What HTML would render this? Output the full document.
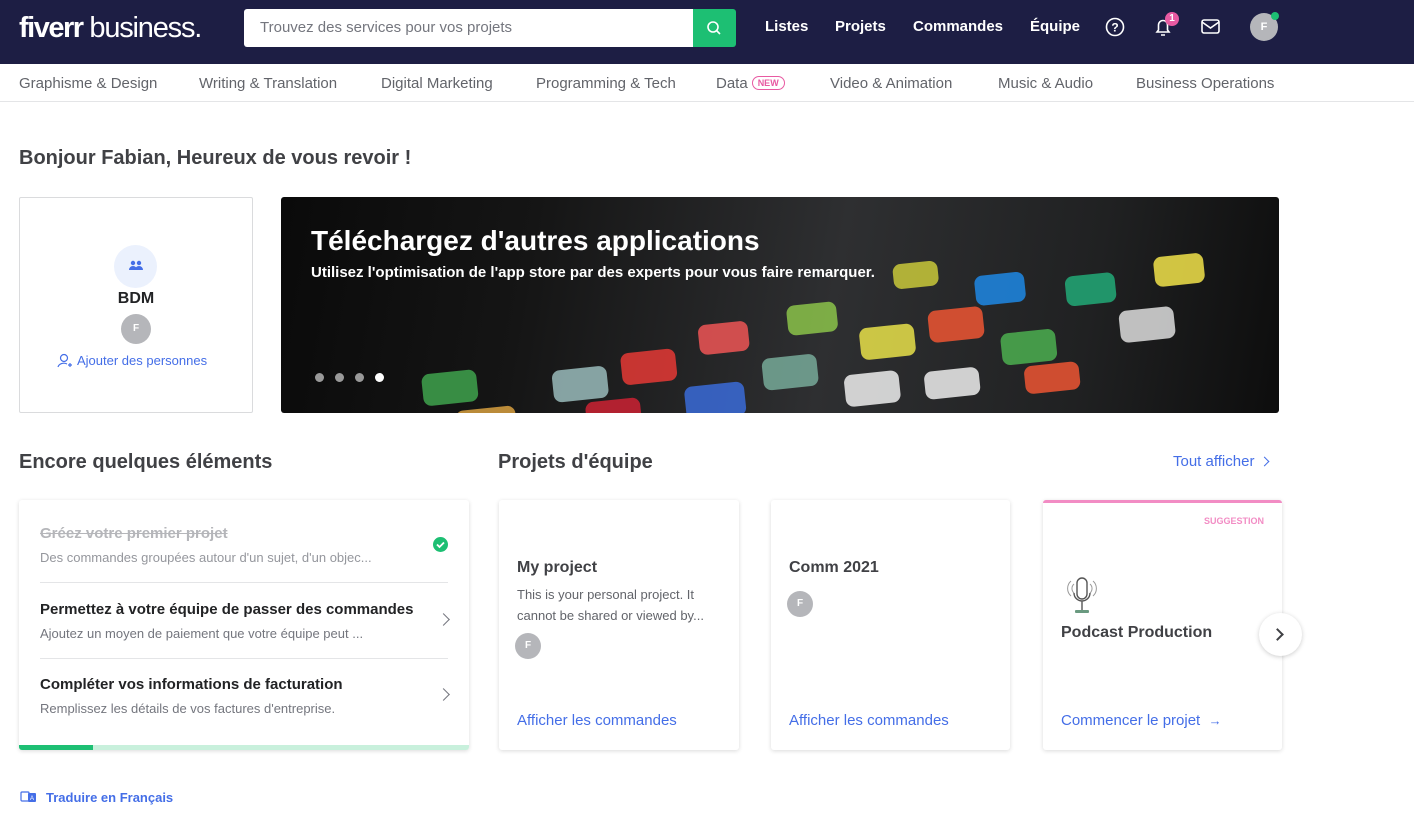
<!DOCTYPE html>
<html><head><meta charset="utf-8"><style>
*{box-sizing:border-box;margin:0;padding:0}
body{width:1414px;height:827px;overflow:hidden;background:#fff;font-family:"Liberation Sans",sans-serif;color:#404145;position:relative}
.top{position:absolute;left:0;top:0;width:1414px;height:64px;background:#1d1e44}
.logo{position:absolute;left:19px;top:12px;color:#fff;font-size:29px;letter-spacing:-1.2px}
.logo b{font-weight:700;letter-spacing:-1.5px}
.search{position:absolute;left:244px;top:9px;width:450px;height:38px;background:#fff;border-radius:3px 0 0 3px;font-size:15px;color:#74767e;padding:10px 16px}
.sbtn{position:absolute;left:693px;top:9px;width:43px;height:38px;background:#1dbf73;border-radius:0 3px 3px 0}
.nav{position:absolute;top:18px;color:#fff;font-weight:700;font-size:15px}
.cats{position:absolute;top:64px;left:0;width:1414px;height:38px;border-bottom:1px solid #e4e5e7}
.cat{position:absolute;top:11px;font-size:15px;color:#62646a}
.new{display:inline-block;border:1px solid #e85aa2;color:#e85aa2;font-size:9px;font-weight:700;border-radius:9px;padding:1px 5px;vertical-align:2px;margin-left:4px}
h1{position:absolute;left:19px;top:147px;font-size:20px;font-weight:700;color:#404145}
h2{position:absolute;font-size:20px;font-weight:700;color:#404145}
.card{position:absolute;background:#fff;border-radius:3px;box-shadow:0 1px 4px rgba(0,0,0,.15)}
.blue{color:#446ee7}
.av{position:absolute;width:26px;height:26px;border-radius:50%;background:#b5b6ba;color:#fff;font-size:10px;font-weight:700;text-align:center;line-height:26px}
.item{position:absolute;left:21px;width:408px}
.item .t{font-size:15px;font-weight:700;color:#222325}
.item .d{font-size:13px;color:#74767e;margin-top:8px}
.chev{position:absolute;right:0;top:14px;width:9px;height:9px;border-right:1.5px solid #74767e;border-top:1.5px solid #74767e;transform:rotate(45deg)}
.pt{position:absolute;left:18px;font-size:16px;font-weight:700;color:#404145}
.pl{position:absolute;left:18px;top:212px;font-size:15px;color:#446ee7}
</style></head><body>
<div class="top">
 <div class="logo"><b>fiverr</b> business.</div>
 <div class="search">Trouvez des services pour vos projets</div>
 <div class="sbtn"><svg width="43" height="38"><circle cx="20" cy="18" r="5" fill="none" stroke="#fff" stroke-width="1.6"/><line x1="24" y1="22" x2="27" y2="25" stroke="#fff" stroke-width="1.6"/></svg></div>
 <div class="nav" style="left:765px">Listes</div>
 <div class="nav" style="left:835px">Projets</div>
 <div class="nav" style="left:913px">Commandes</div>
 <div class="nav" style="left:1030px">Équipe</div>
 <svg style="position:absolute;left:1104px;top:16px" width="22" height="22"><circle cx="11" cy="11" r="8.5" fill="none" stroke="#fff" stroke-width="1.6"/><text x="11" y="15.5" fill="#fff" font-size="12" font-weight="700" text-anchor="middle" font-family="Liberation Sans">?</text></svg>
 <svg style="position:absolute;left:1152px;top:16px" width="22" height="22"><path d="M5 16h12l-1.5-2V9a4.5 4.5 0 0 0-9 0v5z M9 19h4" fill="none" stroke="#fff" stroke-width="1.6"/></svg>
 <div style="position:absolute;left:1165px;top:12px;width:14px;height:14px;border-radius:50%;background:#e85aa2;color:#fff;font-size:10px;font-weight:700;text-align:center;line-height:14px">1</div>
 <svg style="position:absolute;left:1200px;top:17px" width="22" height="20"><rect x="2" y="3" width="17" height="13" rx="2" fill="none" stroke="#fff" stroke-width="1.6"/><path d="M2 5l8.5 6 8.5-6" fill="none" stroke="#fff" stroke-width="1.6"/></svg>
 <div style="position:absolute;left:1250px;top:13px;width:28px;height:28px;border-radius:50%;background:#b5b6ba;color:#fff;font-size:11px;font-weight:700;text-align:center;line-height:28px">F</div>
 <div style="position:absolute;left:1271px;top:12px;width:8px;height:8px;border-radius:50%;background:#1dbf73"></div>
</div>
<div class="cats">
 <div class="cat" style="left:19px">Graphisme &amp; Design</div>
 <div class="cat" style="left:199px">Writing &amp; Translation</div>
 <div class="cat" style="left:381px">Digital Marketing</div>
 <div class="cat" style="left:536px">Programming &amp; Tech</div>
 <div class="cat" style="left:716px">Data<span class="new">NEW</span></div>
 <div class="cat" style="left:830px">Video &amp; Animation</div>
 <div class="cat" style="left:998px">Music &amp; Audio</div>
 <div class="cat" style="left:1136px">Business Operations</div>
</div>
<h1>Bonjour Fabian, Heureux de vous revoir !</h1>
<div style="position:absolute;left:19px;top:197px;width:234px;height:216px;border:1px solid #dadbdd;border-radius:2px">
 <div style="position:absolute;left:94px;top:47px;width:43px;height:43px;border-radius:50%;background:#ebf1fd"></div>
 <svg style="position:absolute;left:108px;top:61px" width="16" height="14"><circle cx="5" cy="4" r="2.2" fill="#446ee7"/><circle cx="11" cy="4" r="2.2" fill="#446ee7"/><path d="M1 11a4 4 0 0 1 8 0zM7 11a4 4 0 0 1 8 0z" fill="#446ee7"/></svg>
 <div style="position:absolute;left:0;width:232px;top:92px;text-align:center;font-weight:700;font-size:16px;color:#222325">BDM</div>
 <div class="av" style="left:101px;top:116px;width:30px;height:30px;line-height:30px">F</div>
 <svg style="position:absolute;left:37px;top:155px" width="16" height="16"><circle cx="7" cy="5" r="3.5" fill="none" stroke="#446ee7" stroke-width="1.2"/><path d="M1 14a6 5 0 0 1 9-3M11 12h4M13 10v4" fill="none" stroke="#446ee7" stroke-width="1.2"/></svg>
 <div class="blue" style="position:absolute;left:57px;top:155px;font-size:13px">Ajouter des personnes</div>
</div>
<div style="position:absolute;left:281px;top:197px;width:998px;height:216px;border-radius:3px;overflow:hidden;background:linear-gradient(100deg,#0a0a0a 0%,#151515 25%,#2e2f31 55%,#202122 80%,#0d0d0d 100%)">
 <svg width="998" height="216" style="position:absolute;left:0;top:0;opacity:.85">
  <g transform="rotate(-6 500 160)">
   <rect x="140" y="140" width="55" height="32" rx="8" fill="#3fa34d"/><rect x="170" y="180" width="60" height="34" rx="8" fill="#d8a040"/><rect x="270" y="150" width="55" height="32" rx="8" fill="#9bb"/>
   <rect x="300" y="185" width="55" height="32" rx="8" fill="#c23"/><rect x="340" y="140" width="55" height="32" rx="8" fill="#e53935"/><rect x="400" y="180" width="60" height="34" rx="8" fill="#3a6bd8"/>
   <rect x="420" y="120" width="50" height="30" rx="8" fill="#e55"/><rect x="480" y="160" width="55" height="32" rx="8" fill="#7a9"/><rect x="510" y="110" width="50" height="30" rx="8" fill="#8bc34a"/>
   <rect x="580" y="140" width="55" height="32" rx="8" fill="#e8e14a"/><rect x="560" y="185" width="55" height="32" rx="8" fill="#eee"/><rect x="650" y="130" width="55" height="32" rx="8" fill="#e53"/>
   <rect x="700" y="100" width="50" height="30" rx="8" fill="#1e88e5"/><rect x="720" y="160" width="55" height="32" rx="8" fill="#4caf50"/><rect x="790" y="110" width="50" height="30" rx="8" fill="#2a7"/>
   <rect x="840" y="150" width="55" height="32" rx="8" fill="#ddd"/><rect x="880" y="100" width="50" height="30" rx="8" fill="#f2e34a"/><rect x="620" y="80" width="45" height="25" rx="8" fill="#c9c93a"/>
   <rect x="740" y="195" width="55" height="28" rx="8" fill="#e53"/><rect x="640" y="190" width="55" height="28" rx="8" fill="#eee"/>
  </g>
 </svg>
 <div style="position:absolute;left:30px;top:28px;color:#fff;font-size:28px;font-weight:700">Téléchargez d'autres applications</div>
 <div style="position:absolute;left:30px;top:67px;color:#fff;font-size:15px;font-weight:700">Utilisez l'optimisation de l'app store par des experts pour vous faire remarquer.</div>
 <div style="position:absolute;left:34px;top:176px;width:9px;height:9px;border-radius:50%;background:#999"></div>
 <div style="position:absolute;left:54px;top:176px;width:9px;height:9px;border-radius:50%;background:#999"></div>
 <div style="position:absolute;left:74px;top:176px;width:9px;height:9px;border-radius:50%;background:#999"></div>
 <div style="position:absolute;left:94px;top:176px;width:9px;height:9px;border-radius:50%;background:#fff"></div>
</div>
<h2 style="left:19px;top:451px">Encore quelques éléments</h2>
<h2 style="left:498px;top:451px">Projets d'équipe</h2>
<div class="blue" style="position:absolute;left:1173px;top:453px;font-size:15px">Tout afficher <span style="display:inline-block;width:7px;height:7px;border-right:1.5px solid #446ee7;border-top:1.5px solid #446ee7;transform:rotate(45deg);margin-left:2px;vertical-align:1px"></span></div>
<div class="card" style="left:19px;top:500px;width:450px;height:250px;overflow:hidden">
 <div class="item" style="top:25px"><div class="t" style="color:#b5b6ba;text-decoration:line-through">Gréez votre premier projet</div><div class="d" style="color:#95979d">Des commandes groupées autour d'un sujet, d'un objec...</div>
  <svg style="position:absolute;right:0;top:12px" width="15" height="15"><circle cx="7.5" cy="7.5" r="7.5" fill="#1dbf73"/><path d="M4 7.5l2.5 2.5 4.5-4.5" fill="none" stroke="#fff" stroke-width="1.8"/></svg></div>
 <div style="position:absolute;left:21px;top:82px;width:408px;border-top:1px solid #e4e5e7"></div>
 <div class="item" style="top:101px"><div class="t">Permettez à votre équipe de passer des commandes</div><div class="d">Ajoutez un moyen de paiement que votre équipe peut ...</div><div class="chev"></div></div>
 <div style="position:absolute;left:21px;top:158px;width:408px;border-top:1px solid #e4e5e7"></div>
 <div class="item" style="top:176px"><div class="t">Compléter vos informations de facturation</div><div class="d">Remplissez les détails de vos factures d'entreprise.</div><div class="chev"></div></div>
 <div style="position:absolute;left:0;bottom:0;width:450px;height:5px;background:#c8f0dc"></div>
 <div style="position:absolute;left:0;bottom:0;width:74px;height:5px;background:#1dbf73"></div>
</div>
<svg style="position:absolute;left:20px;top:788px" width="18" height="18"><rect x="1" y="4" width="8" height="9" rx="1" fill="none" stroke="#446ee7" stroke-width="1.2"/><rect x="8" y="5" width="8" height="9" rx="1" fill="#446ee7"/><text x="12" y="12" font-size="6" fill="#fff" text-anchor="middle" font-family="Liberation Sans">A</text></svg>
<div class="blue" style="position:absolute;left:46px;top:790px;font-size:13px;font-weight:700">Traduire en Français</div>
<div class="card" style="left:499px;top:500px;width:240px;height:250px">
 <div class="pt" style="top:59px">My project</div>
 <div style="position:absolute;left:18px;top:84px;width:205px;font-size:13px;color:#62646a;line-height:21px">This is your personal project. It cannot be shared or viewed by...</div>
 <div class="av" style="left:16px;top:133px">F</div>
 <div class="pl">Afficher les commandes</div>
</div>
<div class="card" style="left:771px;top:500px;width:239px;height:250px">
 <div class="pt" style="top:59px">Comm 2021</div>
 <div class="av" style="left:16px;top:91px">F</div>
 <div class="pl">Afficher les commandes</div>
</div>
<div class="card" style="left:1043px;top:500px;width:239px;height:250px;border-top:3px solid #f28cc4">
 <div style="position:absolute;right:18px;top:13px;font-size:9px;font-weight:700;color:#f28cc4">SUGGESTION</div>
 <svg style="position:absolute;left:22px;top:73px" width="34" height="40"><path d="M6 5a10 10 0 0 0 0 15M28 5a10 10 0 0 1 0 15M9 8a6 6 0 0 0 0 9M25 8a6 6 0 0 1 0 9" fill="none" stroke="#999" stroke-width="1"/><rect x="12" y="2" width="10" height="21" rx="5" fill="none" stroke="#555" stroke-width="1.4"/><path d="M9 17a8 8 0 0 0 16 0M17 25v9" fill="none" stroke="#555" stroke-width="1.4"/><rect x="10" y="34" width="14" height="3" rx="1" fill="#6a9a80"/></svg>
 <div class="pt" style="top:121px">Podcast Production</div>
 <div class="pl" style="top:209px">Commencer le projet &nbsp;<span style="font-size:13px">→</span></div>
</div>
<div style="position:absolute;left:1259px;top:613px;width:43px;height:43px;border-radius:50%;background:#fff;box-shadow:0 1px 5px rgba(0,0,0,.2)"><div style="position:absolute;left:14px;top:17px;width:9px;height:9px;border-right:2px solid #404145;border-top:2px solid #404145;transform:rotate(45deg)"></div></div>
</body></html>
